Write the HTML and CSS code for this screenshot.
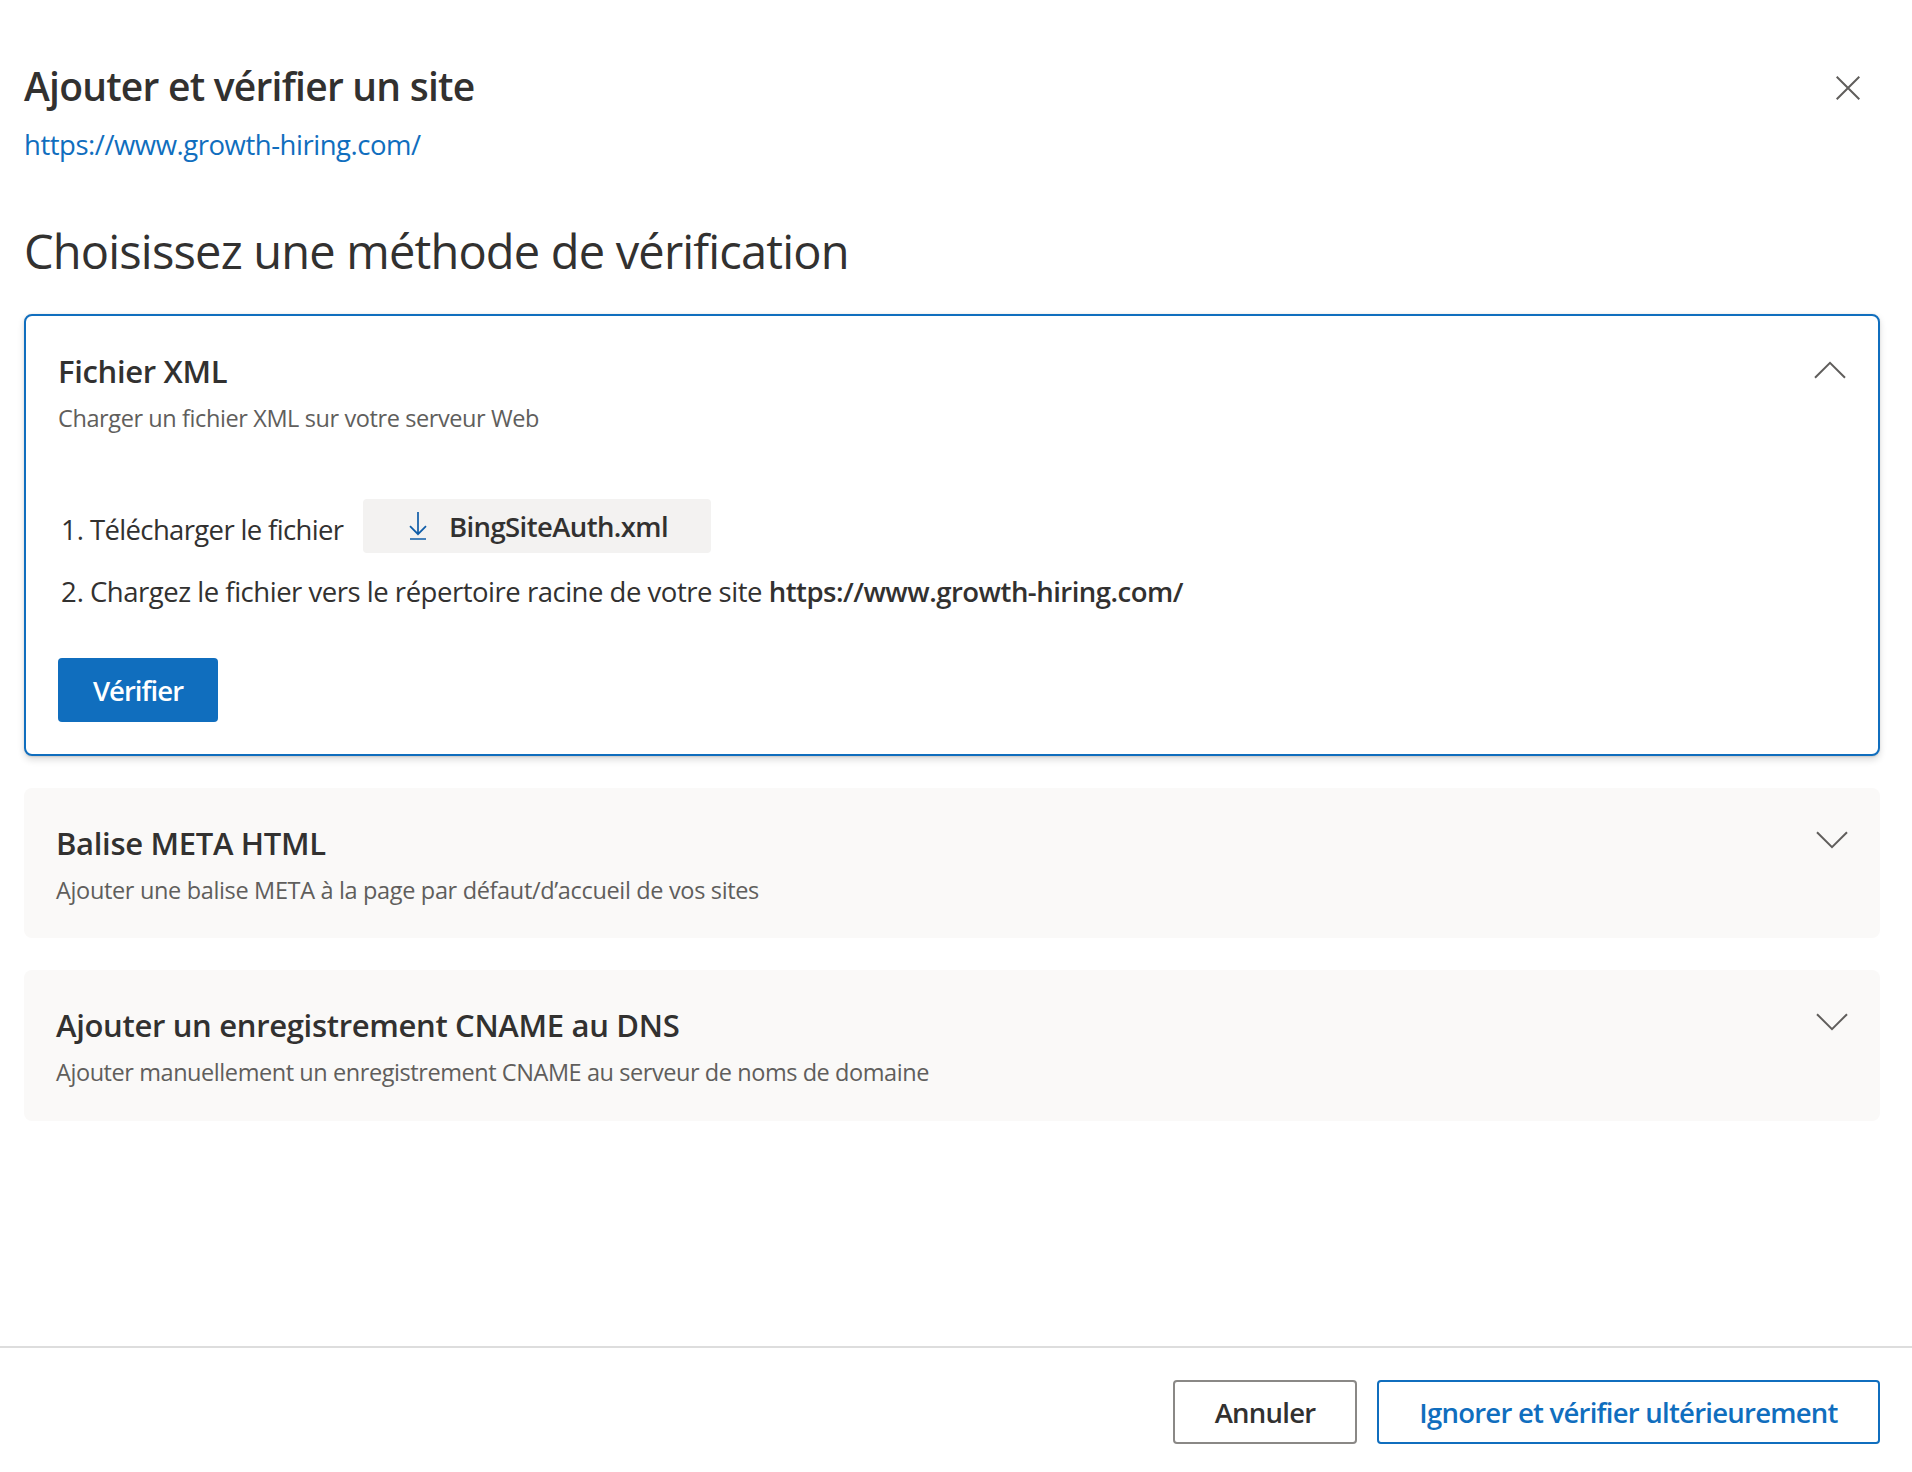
FILE: index.html
```
<!DOCTYPE html>
<html lang="fr">
<head>
    <meta charset="UTF-8">
    <meta name="viewport" content="width=device-width, initial-scale=1.0">
    <title>Ajouter et vérifier un site</title>
    <link rel="stylesheet" href="styles.css">
</head>
<body>
    <main class="panel">
        <header class="panel-header">
            <div>
                <h1>Ajouter et vérifier un site</h1>
                <a class="site-link" href="#">https://www.growth-hiring.com/</a>
            </div>
            <button class="close" aria-label="Fermer">
                <svg width="24" height="24" viewBox="0 0 24 24"><path d="M.7.7l22.6 22.6M23.3.7L.7 23.3"/></svg>
            </button>
        </header>

        <h2>Choisissez une méthode de vérification</h2>

        <section class="card open">
            <div class="card-head">
                <div>
                    <h3>Fichier XML</h3>
                    <p class="desc">Charger un fichier XML sur votre serveur Web</p>
                </div>
                <svg class="chevron" width="32" height="18" viewBox="0 0 32 18"><path d="M1 16.8L16 1.8l15 15"/></svg>
            </div>
            <ol class="steps">
                <li>
                    <span class="num">1.</span>
                    <span class="download-label">Télécharger le fichier</span>
                    <button class="download">
                        <svg width="18" height="28" viewBox="0 0 18 28"><path d="M9 0v22M1 14.2l8 8 8-8M1 27h16"/></svg>
                        <span>BingSiteAuth.xml</span>
                    </button>
                </li>
                <li>
                    <span class="num">2.</span>
                    <span class="upload-label">Chargez le fichier vers le répertoire racine de votre site <strong>https://www.growth-hiring.com/</strong></span>
                </li>
            </ol>
            <button class="btn primary">Vérifier</button>
        </section>

        <section class="card">
            <div class="card-head">
                <div>
                    <h3>Balise META HTML</h3>
                    <p class="desc">Ajouter une balise META à la page par défaut/d’accueil de vos sites</p>
                </div>
                <svg class="chevron" width="32" height="18" viewBox="0 0 32 18"><path d="M1 1.2l15 15 15-15"/></svg>
            </div>
        </section>

        <section class="card">
            <div class="card-head">
                <div>
                    <h3>Ajouter un enregistrement CNAME au DNS</h3>
                    <p class="desc">Ajouter manuellement un enregistrement CNAME au serveur de noms de domaine</p>
                </div>
                <svg class="chevron" width="32" height="18" viewBox="0 0 32 18"><path d="M1 1.2l15 15 15-15"/></svg>
            </div>
        </section>
    </main>

    <footer>
        <button class="btn cancel">Annuler</button>
        <button class="btn skip">Ignorer et vérifier ultérieurement</button>
    </footer>
</body>
</html>
```
FILE: styles.css
```
* {
    margin: 0;
    padding: 0;
    box-sizing: border-box;
}

body {
    display: flex;
    flex-direction: column;
    min-height: 100vh;
    background: #fff;
    color: #323130;
    font-family: 'Segoe UI', 'Open Sans', sans-serif;
    font-size: 27.5px;
    line-height: 40px;
}

button {
    font: inherit;
    font-weight: 600;
    color: inherit;
    border: none;
    cursor: pointer;
}

svg {
    display: block;
    fill: none;
    stroke: #605e5c;
    stroke-width: 2;
}

.panel {
    flex: 1;
    padding: 60px 32px 0 24px;
}

.panel-header {
    display: flex;
    justify-content: space-between;
    align-items: flex-start;
}

h1 {
    font-size: 39px;
    line-height: 52px;
    font-weight: 600;
    letter-spacing: -0.76px;
}

.site-link {
    display: block;
    margin-top: 13px;
    color: #106ebe;
    letter-spacing: -0.47px;
    text-decoration: none;
}

.close {
    margin: 16px 20px 0 0;
    background: none;
}

h2 {
    margin: 56px 0 33px;
    font-size: 47px;
    line-height: 60px;
    font-weight: 400;
    letter-spacing: -0.82px;
}

.card {
    margin-bottom: 32px;
    padding: 35px 32px 32px;
    background: #faf9f8;
    border-radius: 8px;
}

.card:last-child {
    padding-bottom: 33px;
}

.card:last-child .desc {
    letter-spacing: -0.43px;
}

.card.open {
    background: #fff;
    border: 2px solid #106ebe;
    box-shadow: 0 3.2px 7.2px rgba(0, 0, 0, 0.132), 0 0.6px 1.8px rgba(0, 0, 0, 0.108);
}

.card-head {
    display: flex;
    justify-content: space-between;
    align-items: flex-start;
}

h3 {
    font-size: 31px;
    font-weight: 600;
    letter-spacing: -0.32px;
}

.desc {
    margin-top: 11px;
    color: #605e5c;
    font-size: 23.5px;
    line-height: 32px;
    letter-spacing: -0.34px;
}

.open .desc {
    letter-spacing: -0.4px;
}

.chevron {
    margin-top: 8px;
}

.open .chevron {
    margin-top: 10px;
}

.steps {
    display: flex;
    flex-direction: column;
    gap: 19px;
    margin: 65px 0 46px;
    padding-left: 3px;
    list-style: none;
}

.steps li {
    display: flex;
    align-items: flex-end;
}

.steps strong {
    font-weight: 600;
    letter-spacing: -0.5px;
}

.num {
    width: 29px;
}

.steps li:first-child > span {
    margin-bottom: 3px;
}

.download-label {
    width: 273px;
    letter-spacing: -0.65px;
}

.upload-label {
    letter-spacing: -0.48px;
}

.download {
    display: flex;
    align-items: center;
    gap: 22px;
    width: 348px;
    height: 54px;
    padding-left: 46px;
    background: #f3f2f1;
    border-radius: 4px;
    letter-spacing: -0.6px;
}

.download span {
    padding-top: 2px;
}

.download svg {
    stroke: #0f5da8;
    stroke-width: 1.7;
}

.btn {
    height: 64px;
    padding-top: 2px;
    border-radius: 4px;
    letter-spacing: -0.75px;
}

.primary {
    display: block;
    width: 160px;
    background: #106ebe;
    color: #fff;
    letter-spacing: -0.95px;
}

footer {
    display: flex;
    justify-content: flex-end;
    gap: 20px;
    height: 126px;
    padding: 32px 32px 0;
    border-top: 2px solid #ddd;
}

.cancel {
    width: 184px;
    background: #fff;
    border: 2px solid #8a8886;
}

.skip {
    width: 503px;
    background: #fff;
    border: 2px solid #106ebe;
    color: #106ebe;
}
```
